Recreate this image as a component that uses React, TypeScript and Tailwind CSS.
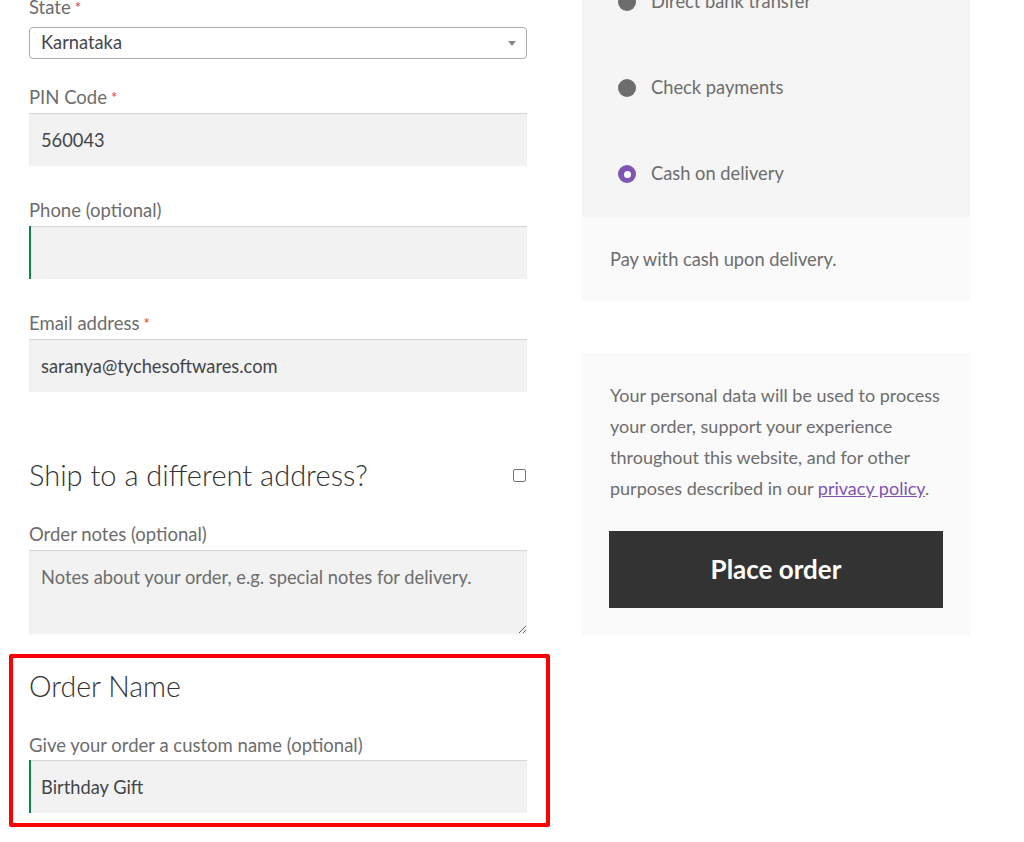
import React from 'react';

const FONT = "font-['Lato','Liberation_Sans',sans-serif]";

// ── Small bits ────────────────────────────────────────────────────────────
function Req() {
  return <abbr className="ml-[4px] text-[#e2401c] no-underline text-[15px] align-top">*</abbr>;
}

function Label({ children, required }: { children: React.ReactNode; required?: boolean }) {
  return (
    <label className="block h-[26px] leading-[26px] text-[18.5px] text-[#6d6d6d]">
      {children}
      {required && <Req />}
    </label>
  );
}

function TextInput({ value, valid }: { value?: string; valid?: boolean }) {
  return (
    <input
      defaultValue={value}
      className={
        'block w-full h-[53px] px-[12px] bg-[#f2f2f2] text-[18.3px] text-[#43454b] outline-none shadow-[inset_0_1px_1px_rgba(0,0,0,0.125)] ' +
        (valid ? 'border-l-2 border-[#0f834d] pl-[10px]' : 'border-0')
      }
    />
  );
}

function Radio({ checked }: { checked?: boolean }) {
  if (checked) {
    return (
      <span className="w-[18px] h-[18px] rounded-full bg-[#7f54b3] flex items-center justify-center shrink-0">
        <span className="w-[7px] h-[7px] rounded-full bg-white" />
      </span>
    );
  }
  return <span className="w-[18px] h-[18px] rounded-full bg-[#6d6d6d] shrink-0" />;
}

// ── Left: billing fields ──────────────────────────────────────────────────
function BillingFields() {
  return (
    <div className="w-[498px] -mt-[6px]">
      <Label required>State</Label>
      <div className="mt-[7px] h-[32px] rounded-[4px] border border-[#aaaaaa] bg-white flex items-center justify-between pl-[11px] pr-[10px]">
        <span className="text-[18.3px] text-[#43454b]">Karnataka</span>
        <svg width="8" height="5" viewBox="0 0 8 5">
          <path d="M0 0h8L4 5z" fill="#888" />
        </svg>
      </div>

      <div className="mt-[25px]">
        <Label required>PIN Code</Label>
        <div className="mt-[3px]">
          <TextInput value="560043" />
        </div>
      </div>

      <div className="mt-[31px]">
        <Label>Phone (optional)</Label>
        <div className="mt-[3px]">
          <TextInput valid />
        </div>
      </div>

      <div className="mt-[31px]">
        <Label required>Email address</Label>
        <div className="mt-[3px]">
          <TextInput value="saranya@tychesoftwares.com" />
        </div>
      </div>

      <div className="mt-[63px] h-[40px] flex items-center justify-between">
        <h3 className="text-[29px] font-light text-[#333333] leading-[40px]">Ship to a different address?</h3>
        <span className="w-[13px] h-[13px] rounded-[2px] border border-[#767676] bg-white mr-[1px]" />
      </div>

      <div className="mt-[26px]">
        <Label>Order notes (optional)</Label>
        <textarea
          placeholder="Notes about your order, e.g. special notes for delivery."
          className="mt-[3px] block w-full h-[84px] px-[12px] py-[14px] bg-[#f2f2f2] text-[18.3px] text-[#43454b] placeholder:text-[#6d6d6d] outline-none shadow-[inset_0_1px_1px_rgba(0,0,0,0.125)]"
        />
      </div>

      {/* Custom order name block, highlighted */}
      <div className="mt-[20px] -ml-[20px] w-[541px] border-4 border-[#ff0000] rounded-[2px] pl-[16px] pr-[19px] pt-[10px] pb-[10px]">
        <h3 className="h-[36px] leading-[36px] text-[28.5px] font-light text-[#333333]">Order Name</h3>
        <div className="mt-[28px]">
          <Label>Give your order a custom name (optional)</Label>
          <div className="mt-[2px]">
            <TextInput value="Birthday Gift" valid />
          </div>
        </div>
      </div>
    </div>
  );
}

// ── Right: payment ────────────────────────────────────────────────────────
const METHODS = [
  { name: 'Direct bank transfer' },
  { name: 'Check payments' },
  { name: 'Cash on delivery', checked: true },
];

function Payment() {
  return (
    <div className="w-[388px] -mt-[41px]">
      <ul className="bg-[#f5f5f5] pl-[36px]">
        {METHODS.map((m) => (
          <li key={m.name} className="h-[86px] flex items-center gap-[15px]">
            <Radio checked={m.checked} />
            <span className="text-[18.3px] text-[#6d6d6d]">{m.name}</span>
          </li>
        ))}
      </ul>
      <div className="h-[84px] bg-[#fafafa] pl-[28px] pt-[2px] flex items-center">
        <p className="text-[18.3px] text-[#6d6d6d]">Pay with cash upon delivery.</p>
      </div>

      <div className="mt-[52px] bg-[#fafafa] pl-[27px] pr-[27px] pt-[27px] pb-[27px]">
        <p className="pl-[1px] text-[18px] leading-[31px] text-[#6d6d6d]">
          Your personal data will be used to process your order, support your experience throughout this website, and for other purposes described in our{' '}
          <a className="text-[#7f54b3] underline">privacy policy</a>.
        </p>
        <button className="mt-[27px] w-full h-[77px] bg-[#333333] text-white text-[26px] font-bold">
          Place order
        </button>
      </div>
    </div>
  );
}

export default function App() {
  return (
    <div className={`${FONT} w-[1024px] h-[842px] overflow-hidden bg-white`}>
      <div className="flex items-start gap-[55px] pl-[29px]">
        <BillingFields />
        <Payment />
      </div>
    </div>
  );
}
